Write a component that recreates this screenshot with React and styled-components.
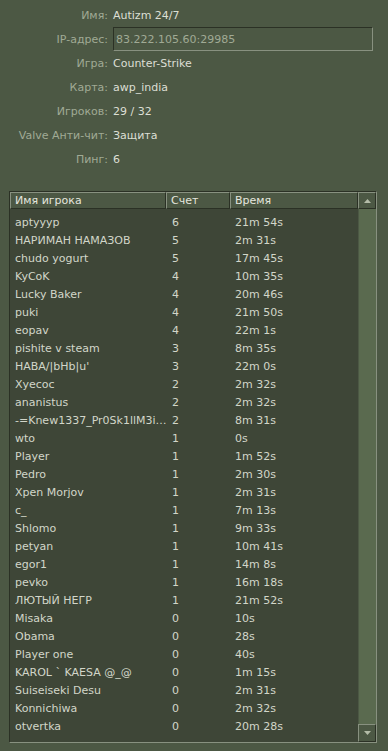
import React from "react";
import styled, { createGlobalStyle } from "styled-components";

const GlobalStyle = createGlobalStyle`
  html, body {
    margin: 0;
    padding: 0;
    background: #4c5844;
  }
  body {
    font-family: "DejaVu Sans", "Liberation Sans", sans-serif;
    font-size: 11px;
    color: #dcdfd4;
  }
`;

const info = [
  { label: "Имя:", value: "Autizm 24/7" },
  { label: "IP-адрес:", value: "83.222.105.60:29985", field: true },
  { label: "Игра:", value: "Counter-Strike" },
  { label: "Карта:", value: "awp_india" },
  { label: "Игроков:", value: "29 / 32" },
  { label: "Valve Анти-чит:", value: "Защита" },
  { label: "Пинг:", value: "6" },
];

const players = [
  ["aptyyyp", 6, "21m 54s"],
  ["НАРИМАН НАМАЗОВ", 5, "2m 31s"],
  ["chudo yogurt", 5, "17m 45s"],
  ["KyCoK", 4, "10m 35s"],
  ["Lucky Baker", 4, "20m 46s"],
  ["puki", 4, "21m 50s"],
  ["eopav", 4, "22m 1s"],
  ["pishite v steam", 3, "8m 35s"],
  ["HABA/|bHb|u'", 3, "22m 0s"],
  ["Xyecoc", 2, "2m 32s"],
  ["ananistus", 2, "2m 32s"],
  ["-=Knew1337_Pr0Sk1llM3ister=-", 2, "8m 31s"],
  ["wto", 1, "0s"],
  ["Player", 1, "1m 52s"],
  ["Pedro", 1, "2m 30s"],
  ["Xpen Morjov", 1, "2m 31s"],
  ["c_", 1, "7m 13s"],
  ["Shlomo", 1, "9m 33s"],
  ["petyan", 1, "10m 41s"],
  ["egor1", 1, "14m 8s"],
  ["pevko", 1, "16m 18s"],
  ["ЛЮТЫЙ НЕГР", 1, "21m 52s"],
  ["Misaka", 0, "10s"],
  ["Obama", 0, "28s"],
  ["Player one", 0, "40s"],
  ["KAROL ` KAESA @_@", 0, "1m 15s"],
  ["Suiseiseki Desu", 0, "2m 31s"],
  ["Konnichiwa", 0, "2m 32s"],
  ["otvertka", 0, "20m 28s"],
];

const Page = styled.div`
  width: 388px;
  height: 751px;
  box-sizing: border-box;
  padding-top: 3px;
  display: flex;
  flex-direction: column;
  overflow: hidden;
`;

const InfoGrid = styled.div`
  display: grid;
  grid-template-columns: 108px 260px;
  grid-auto-rows: 24px;
  column-gap: 5px;
`;

const Label = styled.div`
  color: #a0aa95;
  text-align: right;
  padding-top: 1px;
  line-height: 23px;
  white-space: nowrap;
`;

const Value = styled.div`
  color: #dcdfd4;
  padding-top: 1px;
  line-height: 23px;
  white-space: nowrap;
`;

const Field = styled.div`
  box-sizing: border-box;
  height: 24px;
  padding: 1px 0 0 2px;
  line-height: 21px;
  color: #a0aa95;
  border: 1px solid;
  border-color: #2b3125 #889180 #889180 #2b3125;
`;

const ListPanel = styled.div`
  margin: 20px 0 0 9px;
  width: 368px;
  height: 552px;
  box-sizing: border-box;
  border: 1px solid;
  border-color: #2b3125 #889180 #889180 #2b3125;
  background: #3e4637;
  display: flex;
`;

const ListBody = styled.div`
  width: 348px;
  display: flex;
  flex-direction: column;
`;

const HeaderRow = styled.div`
  display: grid;
  grid-template-columns: 156px 64px 128px;
  height: 17px;
`;

const HeaderCell = styled.div`
  box-sizing: border-box;
  height: 17px;
  padding: 1px 0 0 4px;
  line-height: 14px;
  color: #e4e6de;
  background: #4c5844;
  border: 1px solid;
  border-color: #889180 #2b3125 #2b3125 #889180;
`;

const Rows = styled.div`
  padding-top: 5px;
`;

const Row = styled.div`
  display: grid;
  grid-template-columns: 159px 61px 128px;
  height: 18px;
  line-height: 18px;
  color: #d2d6c9;
`;

const Cell = styled.div`
  padding-left: ${(p) => p.$pad}px;
  white-space: nowrap;
  overflow: hidden;
  text-overflow: ellipsis;
`;

const ScrollBar = styled.div`
  width: 18px;
  display: flex;
  flex-direction: column;
  background: #5a6a4f;
`;

const ScrollButton = styled.div`
  box-sizing: border-box;
  height: ${(p) => p.$h}px;
  background: #4c5844;
  border: 1px solid;
  border-color: #889180 #2b3125 #2b3125 #889180;
  display: flex;
  align-items: center;
  justify-content: center;
`;

const Track = styled.div`
  flex: 1;
  border-left: 1px solid #4c5844;
`;

const Arrow = ({ up }) => (
  <svg width="7" height="4" viewBox="0 0 7 4">
    <polygon
      points={up ? "3.5,0 7,4 0,4" : "0,0 7,0 3.5,4"}
      fill="#b4bca8"
    />
  </svg>
);

export default function App() {
  return (
    <>
      <GlobalStyle />
      <Page>
        <InfoGrid>
          {info.map((item) => (
            <React.Fragment key={item.label}>
              <Label>{item.label}</Label>
              {item.field ? (
                <Field>{item.value}</Field>
              ) : (
                <Value>{item.value}</Value>
              )}
            </React.Fragment>
          ))}
        </InfoGrid>
        <ListPanel>
          <ListBody>
            <HeaderRow>
              <HeaderCell>Имя игрока</HeaderCell>
              <HeaderCell>Счет</HeaderCell>
              <HeaderCell>Время</HeaderCell>
            </HeaderRow>
            <Rows>
              {players.map(([name, score, time]) => (
                <Row key={name}>
                  <Cell $pad={5}>{name}</Cell>
                  <Cell $pad={3}>{score}</Cell>
                  <Cell $pad={5}>{time}</Cell>
                </Row>
              ))}
            </Rows>
          </ListBody>
          <ScrollBar>
            <ScrollButton $h={17}>
              <Arrow up />
            </ScrollButton>
            <Track />
            <ScrollButton $h={18}>
              <Arrow />
            </ScrollButton>
          </ScrollBar>
        </ListPanel>
      </Page>
    </>
  );
}
